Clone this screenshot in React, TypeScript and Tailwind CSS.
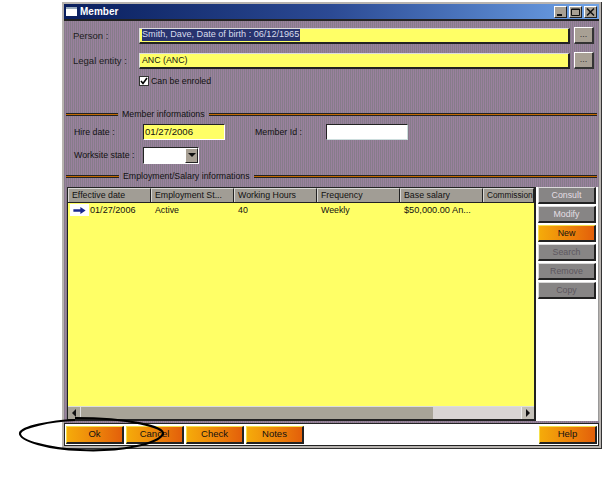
const columns = ["Effective date", "Employment St...", "Working Hours", "Frequency", "Base salary"];

const sideButtons = [
  { label: "Consult", kind: "light" },
  { label: "Modify", kind: "light" },
  { label: "New", kind: "orange" },
  { label: "Search", kind: "dark" },
  { label: "Remove", kind: "dark" },
  { label: "Copy", kind: "dark" },
];

const dither = "bg-[linear-gradient(90deg,#867c8a_50%,#9a819e_50%)] bg-[length:2px_2px]";
const orange =
  "bg-gradient-to-r from-[#f5ab0a] to-[#e35f0a] border-t border-l border-t-[#f5e04a] border-l-[#f5e04a] border-r-2 border-b-2 border-r-[#222] border-b-[#222]";
const headerCell =
  "bg-[#a19d95] border-t border-l border-white/60 border-r border-r-[#222] flex items-center overflow-hidden whitespace-nowrap text-[#111]";

function Divider({ label, width }: { label: string; width: string }) {
  return (
    <div className="flex items-center h-[14px] pl-[2px] pr-[2px]">
      <div className={`${width} h-[3px] bg-[#c06800] border-y border-[#222] shrink-0`} />
      <span className="px-[4px] text-[#111] whitespace-nowrap">{label}</span>
      <div className="flex-1 h-[3px] bg-[#c06800] border-y border-[#222]" />
    </div>
  );
}

function BarButton({ label, width, className = "" }: { label: string; width: string; className?: string }) {
  return (
    <div className={`${width} ${className} ${orange} h-[18px] flex items-center justify-center text-[#111] text-[9.5px]`}>
      {label}
    </div>
  );
}

function SideButton({ label, kind }: { label: string; kind: string }) {
  if (kind === "orange") {
    return <div className={`${orange} h-[17px] flex items-center justify-center text-[#111]`}>{label}</div>;
  }
  return (
    <div
      className={`bg-[#878585] h-[17px] flex items-center justify-center border-t border-l border-white/70 border-r-2 border-b-2 border-r-[#222] border-b-[#222] ${
        kind === "light" ? "text-[#e4dfe4]" : "text-[#5e5860]"
      }`}
    >
      {label}
    </div>
  );
}

function Browse() {
  return (
    <div className="w-[20px] h-[17px] ml-[4px] bg-[#a8a094] border-t border-l border-white border-r-2 border-b-2 border-r-[#333] border-b-[#333] flex items-end justify-center pb-[3px] text-[#333] text-[9px] leading-none">
      ...
    </div>
  );
}

export default function App() {
  return (
    <div className="w-[603px] h-[498px] bg-white pt-[2px] pl-[62px] relative overflow-hidden font-['Liberation_Sans',sans-serif] text-[8.8px] leading-none">
      <div className="w-[540px] h-[447px] bg-[#b8b4b0] border-r border-b border-[#333] p-[2px] flex flex-col">
        <div className="h-[15px] bg-gradient-to-r from-[#0a1f5e] via-[#2c4a94] to-[#6fa3e8] flex items-center pl-[2px] pr-[2px] shrink-0">
          <div className="w-[11px] h-[9px] bg-white border-t-2 border-[#9ab]" />
          <span className="ml-[3px] text-white font-bold text-[10px]">Member</span>
          <div className="ml-auto flex gap-[2px]">
            {["min", "max", "close"].map((name) => (
              <div
                key={name}
                className="w-[13px] h-[12px] bg-[#a8a094] border-t border-l border-white border-r border-b border-r-[#222] border-b-[#222] flex items-center justify-center"
              >
                <svg viewBox="0 0 9 8" className="w-[9px] h-[8px]" fill="none" stroke="#111">
                  {name === "min" && <path d="M1 7h5" strokeWidth="2" />}
                  {name === "max" && <path d="M0.5 1h8v6.5h-8zM0.5 1.5h8" />}
                  {name === "close" && <path d="M1 0.5l7 7M8 0.5l-7 7" strokeWidth="1.5" />}
                </svg>
              </div>
            ))}
          </div>
        </div>

        <div className={`${dither} flex-1 flex flex-col border-t-2 border-[#222] text-[#111]`}>
          <div className="flex items-center h-[17px] mt-[6px] pl-[9px] pr-[5px]">
            <span className="w-[66px] text-[#1c1c1c] text-[9.5px]">Person :</span>
            <div className="flex-1 h-[16px] bg-[#ffff66] border-t border-l border-[#ddd] border-r-2 border-b-2 border-r-[#222] border-b-[#222] flex items-center pl-[2px]">
              <span className="bg-[#28336e] text-[#d8dcec] h-[12px] flex items-center pr-px text-[9.1px]">
                Smith, Dave, Date of birth : 06/12/1965
              </span>
            </div>
            <Browse />
          </div>
          <div className="flex items-center h-[17px] mt-[8px] pl-[9px] pr-[5px]">
            <span className="w-[66px] text-[#1c1c1c] text-[9.5px]">Legal entity :</span>
            <div className="flex-1 h-[16px] bg-[#ffff66] border-t border-l border-[#ddd] border-r-2 border-b-2 border-r-[#222] border-b-[#222] flex items-center pl-[2px]">
              ANC (ANC)
            </div>
            <Browse />
          </div>
          <div className="flex items-center h-[12px] mt-[6px] pl-[75px]">
            <div className="w-[10px] h-[10px] bg-white border border-[#333] flex items-center justify-center">
              <svg viewBox="0 0 8 8" className="w-[8px] h-[8px]" fill="none" stroke="#000" strokeWidth="1.6">
                <path d="M1 4l2 2.5L7 1" />
              </svg>
            </div>
            <span className="ml-[2px]">Can be enroled</span>
          </div>

          <div className="mt-[20px]">
            <Divider label="Member informations" width="w-[52px]" />
          </div>

          <div className="flex items-center h-[16px] mt-[3px] pl-[10px]">
            <span className="w-[69px]">Hire date :</span>
            <div className="w-[82px] h-[16px] bg-[#ffff66] border-t border-l border-t-[#222] border-l-[#222] border-r border-b border-r-white border-b-white flex items-center pl-px text-[9.6px]">
              01/27/2006
            </div>
            <span className="ml-[30px] w-[71px]">Member Id :</span>
            <div className="w-[82px] h-[16px] bg-white border-t border-l border-t-[#222] border-l-[#222] border-r border-b border-r-[#cdd] border-b-[#cdd]" />
          </div>
          <div className="flex items-center h-[16px] mt-[7px] pl-[10px]">
            <span className="w-[69px]">Worksite state :</span>
            <div className="w-[56px] h-[17px] bg-white border-t border-l border-t-[#222] border-l-[#222] border-r border-b border-r-white border-b-white flex justify-end">
              <div className="w-[13px] bg-[#a8a094] border-t border-l border-white border-r border-b border-r-[#222] border-b-[#222] flex items-center justify-center">
                <div className="w-0 h-0 border-l-[4px] border-r-[4px] border-t-[4px] border-l-transparent border-r-transparent border-t-[#111]" />
              </div>
            </div>
          </div>

          <div className="mt-[6px]">
            <Divider label="Employment/Salary informations" width="w-[53px]" />
          </div>

          <div className="flex flex-1 mt-[4px] ml-[3px]">
            <div className="w-[469px] flex flex-col border-l border-t border-r-2 border-b-2 border-[#222]">
              <div className="flex h-[15px] shrink-0 border-b border-[#222]">
                {columns.map((label) => (
                  <div key={label} className={`w-[83px] pl-[3px] ${headerCell}`}>
                    {label}
                  </div>
                ))}
                <div className={`w-[51px] pl-[3px] text-[8.3px] ${headerCell}`}>Commission</div>
              </div>
              <div className="flex-1 bg-[#ffff66]">
                <div className="flex items-center h-[14px]">
                  <div className="w-[83px] flex items-center pl-[2px]">
                    <div className="w-[19px] h-[12px] bg-white flex items-center justify-center">
                      <svg viewBox="0 0 14 8" className="w-[13px] h-[7px]" fill="#1a2a90">
                        <path d="M0 2.5h8V0l6 4-6 4V5.5H0z" />
                      </svg>
                    </div>
                    <span className="ml-[1px] pt-px text-[9.1px]">01/27/2006</span>
                  </div>
                  <div className="w-[83px] pl-[4px]">Active</div>
                  <div className="w-[83px] pl-[4px]">40</div>
                  <div className="w-[83px] pl-[4px]">Weekly</div>
                  <div className="w-[83px] pl-[4px] pt-px whitespace-nowrap text-[9.2px]">$50,000.00 An...</div>
                </div>
              </div>
              <div className="h-[13px] shrink-0 flex bg-[#a8a498] border-t border-[#ddd]">
                <div className="w-[13px] border-r border-[#ddd] flex items-center justify-center">
                  <div className="w-0 h-0 border-t-[4px] border-b-[4px] border-r-[4px] border-t-transparent border-b-transparent border-r-[#111]" />
                </div>
                <div className="flex-1" />
                <div className="w-[88px] bg-[#d8d4d4]" />
                <div className="w-[13px] bg-[#c4c0b8] border-l border-[#eee] flex items-center justify-center">
                  <div className="w-0 h-0 border-t-[4px] border-b-[4px] border-l-[4px] border-t-transparent border-b-transparent border-l-[#111]" />
                </div>
              </div>
            </div>
            <div className="flex-1 bg-white pl-[2px] pr-[2px] flex flex-col gap-[2px] border-r border-[#999]">
              {sideButtons.map((btn) => (
                <SideButton key={btn.label} label={btn.label} kind={btn.kind} />
              ))}
            </div>
          </div>

          <div className="h-[23px] mt-[2px] bg-white border border-[#222] flex items-center pl-[1px] pr-[1px] shrink-0">
            <BarButton label="Ok" width="w-[58px]" />
            <BarButton label="Cancel" width="w-[58px]" className="ml-[2px]" />
            <BarButton label="Check" width="w-[58px]" className="ml-[2px]" />
            <BarButton label="Notes" width="w-[58px]" className="ml-[2px]" />
            <BarButton label="Help" width="w-[58px]" className="ml-auto" />
          </div>
        </div>
      </div>

      {/* hand drawn ellipse over the Ok button */}
      <svg className="absolute left-0 top-0 pointer-events-none" width="603" height="498" fill="none">
        <path
          d="M75 420C50 421 22 427 20 433C19 441 50 449 80 450C120 452 158 444 163 434C165 427 130 418 75 418"
          stroke="#000"
          strokeWidth="2.2"
        />
      </svg>
    </div>
  );
}
